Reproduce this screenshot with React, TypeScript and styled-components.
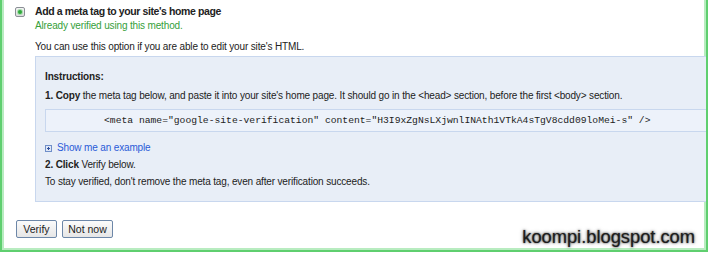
import React from 'react'
import styled, { createGlobalStyle } from 'styled-components'

const GlobalStyle = createGlobalStyle`
  html, body {
    margin: 0;
    padding: 0;
    background: #fff;
  }
  body {
    font-family: "Liberation Sans", Arial, sans-serif;
    color: #222;
  }
`

const Frame = styled.div`
  position: relative;
  box-sizing: border-box;
  width: 708px;
  height: 252px;
  border: 2px solid #5fcf6f;
  border-top: none;
  box-shadow: inset 2px 0 0 #b8ecc0, inset -2px 0 0 #b8ecc0, inset 0 -2px 0 #b8ecc0;
  padding: 4px 0 0 13px;
  font-size: 10px;
  letter-spacing: -0.15px;
  overflow: hidden;
`

const OptionRow = styled.div`
  display: flex;
  align-items: flex-start;
  gap: 10px;
`

const Radio = styled.span`
  box-sizing: border-box;
  flex: none;
  width: 10px;
  height: 10px;
  margin-top: 3px;
  border: 1px solid #8a8f95;
  border-radius: 2px;
  background: linear-gradient(#f4f4f4, #dcdcdc);
  display: flex;
  align-items: center;
  justify-content: center;

  &::after {
    content: '';
    width: 4px;
    height: 4px;
    border-radius: 50%;
    background: #2fa83a;
    box-shadow: 0 0 0 1px #a8dcae;
  }
`

const Body = styled.div`
  flex: 1;
  display: flex;
  flex-direction: column;
`

const Title = styled.div`
  font-weight: bold;
  font-size: 10.5px;
  letter-spacing: -0.4px;
  line-height: 15px;
`

const Verified = styled.div`
  color: #35a03a;
  line-height: 14px;
`

const Intro = styled.p`
  margin: 7px 0 0;
  line-height: 14px;
`

const Panel = styled.div`
  margin-top: 2px;
  background: #e8eef7;
  border: 1px solid #c8d7ee;
  border-right: none;
  padding: 13px 0 12px 9px;
  display: flex;
  flex-direction: column;
`

const PanelHead = styled.div`
  font-weight: bold;
  line-height: 14px;
`

const Step = styled.div<{ $gap?: number }>`
  margin-top: ${p => p.$gap ?? 0}px;
  line-height: 14px;
`

const CodeBox = styled.div`
  margin-top: 6px;
  border: 1px solid #c8d7ee;
  border-right: none;
  background: #edf2fa;
  height: 21px;
  display: flex;
  align-items: center;
  padding-left: 58px;
  font-family: "Liberation Mono", "Courier New", monospace;
  font-size: 9.7px;
  letter-spacing: 0;
  white-space: nowrap;
`

const ExampleLink = styled.a`
  margin-top: 9px;
  display: flex;
  align-items: center;
  gap: 5px;
  color: #2a5bd7;
  text-decoration: none;
  line-height: 14px;
  cursor: pointer;
`

const PlusBox = styled.span`
  box-sizing: border-box;
  width: 7px;
  height: 7px;
  border: 1px solid #6f8fc9;
  background: #dfe7f6;
  position: relative;

  &::before, &::after {
    content: '';
    position: absolute;
    background: #2d4f9c;
  }
  &::before {
    left: 1px;
    top: 2px;
    width: 3px;
    height: 1px;
  }
  &::after {
    left: 2px;
    top: 1px;
    width: 1px;
    height: 3px;
  }
`

const Buttons = styled.div`
  margin-top: 18px;
  margin-left: 1px;
  display: flex;
  gap: 5px;
`

const Button = styled.button<{ $w: number }>`
  box-sizing: border-box;
  width: ${p => p.$w}px;
  height: 18px;
  padding: 0;
  border: 1px solid #6d87a8;
  border-radius: 2px;
  background: linear-gradient(#fbfbfb, #e6e6e6);
  font-family: "Liberation Sans", Arial, sans-serif;
  font-size: 10.5px;
  color: #222;
`

const Watermark = styled.div`
  position: absolute;
  right: 11px;
  bottom: 2px;
  font-size: 18.3px;
  letter-spacing: 0;
  color: #1c1c1c;
  text-shadow: 0 0 2px rgba(0, 0, 0, 0.8), 0 0 4px rgba(0, 0, 0, 0.4);
`

export default function App() {
  return (
    <>
      <GlobalStyle />
      <Frame>
        <OptionRow>
          <Radio />
          <Body>
            <Title>Add a meta tag to your site's home page</Title>
            <Verified>Already verified using this method.</Verified>
            <Intro>You can use this option if you are able to edit your site's HTML.</Intro>
            <Panel>
              <PanelHead>Instructions:</PanelHead>
              <Step $gap={5}>
                <b>1. Copy</b> the meta tag below, and paste it into your site's home page. It should go in the &lt;head&gt; section, before the first &lt;body&gt; section.
              </Step>
              <CodeBox>
                &lt;meta name="google-site-verification" content="H3I9xZgNsLXjwnlINAth1VTkA4sTgV8cdd09loMei-s" /&gt;
              </CodeBox>
              <ExampleLink>
                <PlusBox />
                Show me an example
              </ExampleLink>
              <Step $gap={3}>
                <b>2. Click</b> Verify below.
              </Step>
              <Step $gap={3}>To stay verified, don't remove the meta tag, even after verification succeeds.</Step>
            </Panel>
          </Body>
        </OptionRow>
        <Buttons>
          <Button $w={41}>Verify</Button>
          <Button $w={51}>Not now</Button>
        </Buttons>
        <Watermark>koompi.blogspot.com</Watermark>
      </Frame>
    </>
  )
}
